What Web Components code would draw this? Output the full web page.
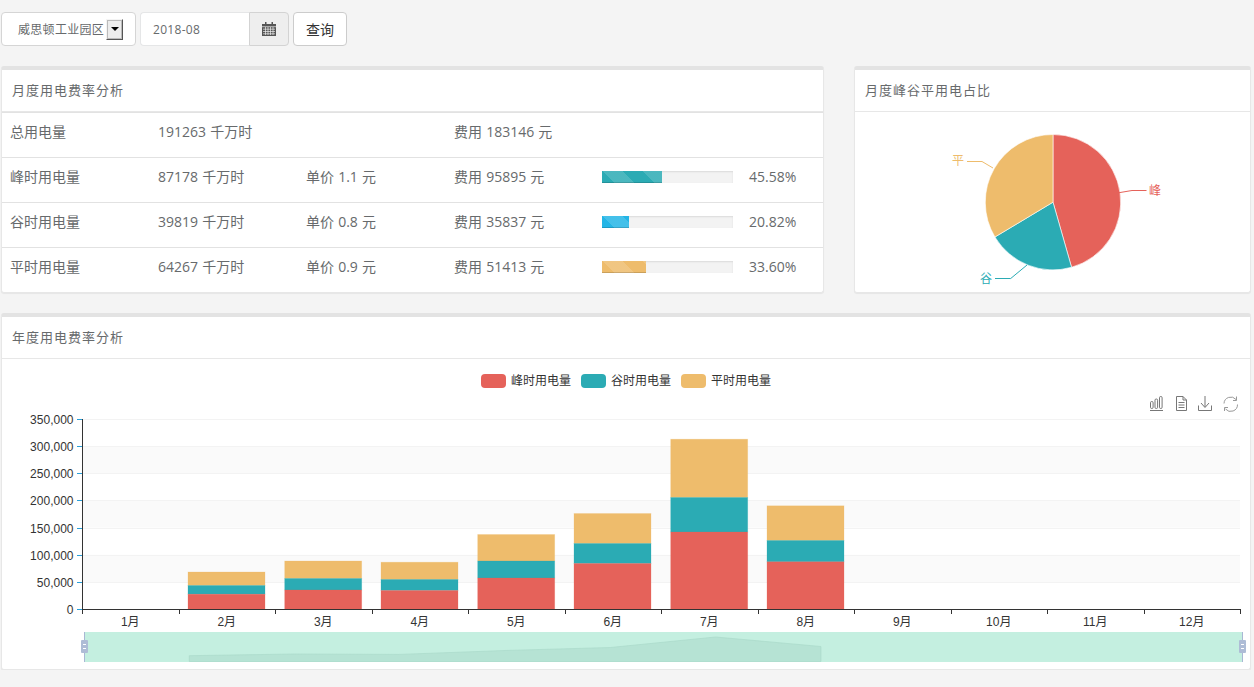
<!DOCTYPE html>
<html lang="zh">
<head>
<meta charset="utf-8">
<title>用电费率分析</title>
<style>
html,body{margin:0;padding:0;background:#f4f4f4;overflow:hidden}
body{font-family:"Open Sans","Noto Sans CJK SC",sans-serif;color:#676a6c}
energy-dashboard{display:block}
</style>
</head>
<body>
<energy-dashboard></energy-dashboard>
<script>
const FONT = '"Open Sans","Noto Sans CJK SC",sans-serif';
const CHART_FONT = '"Liberation Sans","Noto Sans CJK SC",sans-serif';
const RED='#e5625a', TEAL='#2babb4', YEL='#eebc6c';

class QueryBar extends HTMLElement{
  constructor(){super();this.attachShadow({mode:'open'}).innerHTML=`
  <style>
  :host{display:flex;align-items:flex-start;height:34px;font-family:${FONT}}
  .sel{box-sizing:border-box;width:135px;height:34px;background:#fff;border:1px solid #d5d5d5;border-radius:4px;
    display:flex;align-items:center;padding:0 12px 0 16px;justify-content:space-between;font-size:12px;letter-spacing:.3px;color:#676a6c;margin-right:4px}
  .arrow{box-sizing:border-box;width:17px;height:21px;background:#ededed;border:1px solid;border-color:#f4f4f4 #555 #555 #f4f4f4;
    display:flex;align-items:center;justify-content:center;outline:1px solid #bbb;outline-offset:-2px}
  .arrow i{width:0;height:0;border:4px solid transparent;border-top:4px solid #000;border-bottom:0}
  .date{display:flex;width:149px;height:34px;margin-right:4px}
  .inp{box-sizing:border-box;flex:1;background:#fff;border:1px solid #e5e6e7;border-right:0;border-radius:4px 0 0 4px;
    padding-left:12px;font-size:12px;letter-spacing:.3px;line-height:33px;color:#676a6c}
  .add{box-sizing:border-box;width:40px;background:#eee;border:1px solid #d3d3d3;border-radius:0 4px 4px 0;display:flex;align-items:center;justify-content:center}
  .btn{box-sizing:border-box;width:54px;height:34px;background:#fff;border:1px solid #ccc;border-radius:4px;font-size:14px;color:#333;
    display:flex;align-items:center;justify-content:center}
  </style>
  <div class="sel"><span>威思顿工业园区</span><span class="arrow"><i></i></span></div>
  <div class="date"><div class="inp">2018-08</div><div class="add">
    <svg width="14" height="14" viewBox="0 0 14 14"><path fill="#555" d="M0 2h3V0h1.5v2h5V0H11v2h3v12H0z"/><path stroke="#eee" stroke-width=".7" fill="none" d="M0 4.7h14M1 7.2h12M1 9.5h12M1 11.8h12M3.5 5v8M6 5v8M8.5 5v8M11 5v8"/></svg>
  </div></div>
  <div class="btn">查询</div>`;}
}
customElements.define('query-bar',QueryBar);

class InfoPanel extends HTMLElement{
  constructor(){super();this.attachShadow({mode:'open'}).innerHTML=`
  <style>
  :host{display:block;box-sizing:border-box;background:#fff;border:1px solid #e7e7e7;border-top:4px solid #e3e3e3;border-radius:3px;
    box-shadow:0 1px 1px rgba(0,0,0,.06);font-family:${FONT}}
  header{box-sizing:border-box;height:42px;border-bottom:1px solid #e7e7e7;padding-left:10px;font-size:13px;line-height:41px;color:#676a6c;letter-spacing:1px;white-space:nowrap}
  </style>
  <header></header><slot></slot>`;
  this.shadowRoot.querySelector('header').textContent=this.getAttribute('heading');}
}
customElements.define('info-panel',InfoPanel);

class StripeBar extends HTMLElement{
  constructor(){super();
    const c=this.getAttribute('color'),w=this.getAttribute('value');
    this.attachShadow({mode:'open'}).innerHTML=`
  <style>
  :host{display:block;width:131px;height:12px;background:#f3f3f3;box-shadow:inset 0 1px 2px rgba(0,0,0,.1)}
  div{height:100%;width:${w}%;background-color:${c};box-shadow:inset 0 -1px 0 rgba(0,0,0,.15);
    background-image:repeating-linear-gradient(45deg,transparent 0,transparent 8.49px,rgba(255,255,255,.15) 8.49px,rgba(255,255,255,.15) 22.63px,transparent 22.63px,transparent 28.28px)}
  </style><div></div>`;}
}
customElements.define('stripe-bar',StripeBar);

class UsageRow extends HTMLElement{
  constructor(){super();
    const a=n=>this.getAttribute(n)||'';
    const bar=a('value')?`<stripe-bar value="${a('value')}" color="${a('color')}"></stripe-bar>`:'';
    this.attachShadow({mode:'open'}).innerHTML=`
  <style>
  :host{display:grid;grid-template-columns:148px 148px 148px 148px 155px 1fr;box-sizing:border-box;height:45px;border-top:1px solid #e2e2e2;
    font-size:14px;word-spacing:.5px;color:#676a6c;font-family:${FONT};white-space:nowrap}
  span{padding:9px 0 0 8px;line-height:20px}
  .b{padding-top:13px}
  .b stripe-bar{display:block}
  </style>
  <span>${a('name')}</span><span>${a('amount')}</span><span>${a('price')}</span><span>${a('cost')}</span><span class="b">${bar}</span><span style="padding-left:0">${a('pct')}</span>`;}
}
customElements.define('usage-row',UsageRow);

class PieChart extends HTMLElement{
  constructor(){super();
    const cx=1053,cy=202.2,r=67.7,vals=[[45.58,RED],[20.82,TEAL],[33.6,YEL]];
    let ang=0,paths='';
    for(const [v,c] of vals){
      const a1=ang,a2=ang+v/100*2*Math.PI;ang=a2;
      const p=a=>`${(cx+r*Math.sin(a)).toFixed(2)} ${(cy-r*Math.cos(a)).toFixed(2)}`;
      paths+=`<path d="M${cx} ${cy}L${p(a1)}A${r} ${r} 0 ${a2-a1>Math.PI?1:0} 1 ${p(a2)}Z" fill="${c}" stroke="#fff" stroke-width=".6"/>`;
    }
    this.attachShadow({mode:'open'}).innerHTML=`
  <style>:host{display:block;height:180px}svg{display:block}text{font:12px ${CHART_FONT}}</style>
  <svg width="395" height="180" viewBox="855 112 395 180">
  ${paths}
  <path d="M1119 192.7L1132 190.5H1146.5" fill="none" stroke="${RED}"/>
  <path d="M1027 265L1010.7 278.5H995" fill="none" stroke="${TEAL}"/>
  <path d="M993 168L982 161.5H967" fill="none" stroke="${YEL}"/>
  <text x="1149" y="195" fill="${RED}">峰</text>
  <text x="980" y="283" fill="${TEAL}">谷</text>
  <text x="952" y="165" fill="${YEL}">平</text>
  </svg>`;}
}
customElements.define('pie-chart',PieChart);

class StackChart extends HTMLElement{
  constructor(){super();
    const bars=[[188,571.5,585,593.7],[284.7,560.5,578,589.5],[381,561.7,579,590],[477.7,534,560.5,577.5],[574,513,543,563],[670.7,438.7,497,531.5],[767,505.3,540,561.3]];
    const X0=82,STEP=96.5,Y0=609,YSTEP=27.13;
    let s='';
    // bands + split lines
    for(let i=0;i<7;i++){
      const y=Y0-YSTEP*(i+1);
      if(i%2==1) s+=`<rect x="${X0}" y="${y}" width="1158" height="${YSTEP}" fill="#fafafa"/>`;
    }
    for(let i=1;i<=7;i++){
      const y=Math.round(Y0-YSTEP*i)+.5;
      s+=`<path d="M${X0} ${y}H1240" stroke="#f3f3f3"/>`;
    }
    // bars
    const seg=(x,t,b,c)=>`<rect x="${x}" y="${t+.5}" width="77" height="${b-t}" fill="${c}" stroke="${c}" stroke-opacity=".3" stroke-width=".8"/>`;
    for(const [x,ty,tt,tr] of bars){
      s+=seg(x,ty,tt,YEL)+seg(x,tt,tr,TEAL)+seg(x,tr,Y0-.5,RED);
    }
    // y axis
    const labels=['0','50,000','100,000','150,000','200,000','250,000','300,000','350,000'];
    labels.forEach((l,i)=>{
      const y=Math.round(Y0-YSTEP*i);
      s+=`<path d="M77 ${y+.5}H82" stroke="#2a9fd8"/>`;
      s+=`<text x="73.5" y="${y+4.5}" text-anchor="end">${l}</text>`;
    });
    s+=`<path d="M82.5 419V609.5M82 609.5H1240.5" stroke="#333" fill="none"/>`;
    for(let i=0;i<=12;i++){
      const x=Math.round(X0+STEP*i)+.5;
      s+=`<path d="M${x} 609V614" stroke="#333"/>`;
      if(i<12) s+=`<text x="${X0+STEP*(i+.5)}" y="626" text-anchor="middle">${i+1}月</text>`;
    }
    // legend
    [[481,RED,'峰时用电量'],[581,TEAL,'谷时用电量'],[681,YEL,'平时用电量']].forEach(([x,c,t])=>{
      s+=`<rect x="${x}" y="374" width="25" height="14" rx="4" fill="${c}"/><text x="${x+30}" y="385">${t}</text>`;
    });
    // toolbox
    s+=`<g fill="none" stroke="#777" stroke-width="1">
      <path d="M1150 410.5H1163"/>
      <rect x="1150.5" y="401.5" width="2.6" height="7" rx="1.2"/><rect x="1155" y="399" width="2.6" height="9.5" rx="1.2"/><rect x="1159.5" y="396.5" width="2.6" height="12" rx="1.2"/>
      <path d="M1176.5 396.5H1183L1186.5 400V410.5H1176.5ZM1183 396.5V400H1186.5M1178.5 402.5H1184.5M1178.5 405H1184.5M1178.5 407.5H1184.5"/>
      <path d="M1198.5 405.5V410.5H1211.5V405.5M1205 396V407M1201 403L1205 407.5L1209 403"/>
      <path stroke="#999" d="M1224 403.5A6.8 6.8 0 0 1 1236 399.5M1237.5 404.5A6.8 6.8 0 0 1 1225.5 409"/>
      <path stroke="#999" d="M1236.5 396.5V400.5H1233M1224.5 411V407.5H1228"/>
    </g>`;
    // data zoom
    const px=i=>84+i*105.27;
    const pts=[[1,655.7],[2,654],[3,654.4],[4,650.5],[5,647.5],[6,637],[7,646.5]];
    const line=pts.map(([i,y])=>`${px(i).toFixed(1)} ${y}`).join('L');
    s+=`<rect x="84" y="632" width="1158" height="30" fill="#c4efe0"/>
      <path d="M${px(1).toFixed(1)} 661.5L${line}L${px(7).toFixed(1)} 661.5Z" fill="#b6e3d4" stroke="#abdaca" stroke-width=".7"/>
      <path d="M84.5 632V662M1242.5 632V662" stroke="#a9b7d4"/>`;
    for(const x of [81,1239]){
      s+=`<rect x="${x}" y="640" width="7" height="13" rx="1" fill="#aebcd6"/><path d="M${x+2} 644.5H${x+5}M${x+2} 648.5H${x+5}" stroke="#fff"/>`;
    }
    this.attachShadow({mode:'open'}).innerHTML=`
  <style>:host{display:block;height:310px}svg{display:block}text{font:12px ${CHART_FONT};fill:#333}</style>
  <svg width="1248" height="310" viewBox="2 359 1248 310">${s}</svg>`;}
}
customElements.define('stack-chart',StackChart);

class EnergyDashboard extends HTMLElement{
  constructor(){super();this.attachShadow({mode:'open'}).innerHTML=`
  <style>
  :host{display:block;box-sizing:border-box;padding:12px 3px 0 1px}
  .top{display:grid;grid-template-columns:823px 397px;column-gap:30px;margin:20px 0}
  .top info-panel{height:227px}
  </style>
  <query-bar></query-bar>
  <div class="top">
    <info-panel heading="月度用电费率分析">
      <usage-row name="总用电量" amount="191263 千万时" cost="费用 183146 元"></usage-row>
      <usage-row name="峰时用电量" amount="87178 千万时" price="单价 1.1 元" cost="费用 95895 元" value="45.58" color="${TEAL}" pct="45.58%"></usage-row>
      <usage-row name="谷时用电量" amount="39819 千万时" price="单价 0.8 元" cost="费用 35837 元" value="20.82" color="#23b5e6" pct="20.82%"></usage-row>
      <usage-row name="平时用电量" amount="64267 千万时" price="单价 0.9 元" cost="费用 51413 元" value="33.60" color="${YEL}" pct="33.60%"></usage-row>
    </info-panel>
    <info-panel heading="月度峰谷平用电占比"><pie-chart></pie-chart></info-panel>
  </div>
  <info-panel heading="年度用电费率分析"><stack-chart></stack-chart></info-panel>`;}
}
customElements.define('energy-dashboard',EnergyDashboard);
</script>
</body>
</html>
